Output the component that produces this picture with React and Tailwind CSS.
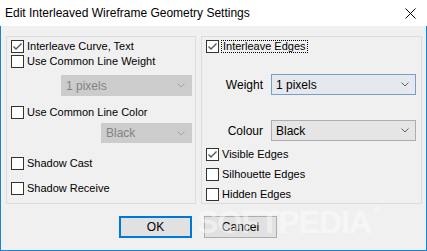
import React from "react";

const Check = ({ checked }) => (
  <div className="w-[13px] h-[13px] border border-[#333333] bg-white flex items-center justify-center shrink-0">
    {checked && (
      <svg width="11" height="11" viewBox="0 0 11 11">
        <path d="M1.5 5.5 L4 8 L9.5 2.5" fill="none" stroke="#555555" strokeWidth="1.4" />
      </svg>
    )}
  </div>
);

const Row = ({ checked, label, className = "", focus = false }) => (
  <div className={"flex items-center h-[13px] " + className}>
    <Check checked={checked} />
    {focus ? (
      <span className="ml-[2px] px-[1px] leading-[11px] border border-dotted border-black text-black">{label}</span>
    ) : (
      <span className="ml-[3px] leading-[13px] text-black">{label}</span>
    )}
  </div>
);

const Chevron = ({ color }) => (
  <svg width="8" height="5" viewBox="0 0 8 5" className="shrink-0">
    <path d="M0.5 0.5 L4 4 L7.5 0.5" fill="none" stroke={color} strokeWidth="1" />
  </svg>
);

const Select = ({ value, className = "", disabled = false, hover = false }) => (
  <div
    className={
      "flex items-center justify-between pl-[4px] pr-[6px] border " +
      (disabled
        ? "bg-[#cccccc] border-[#cccccc] text-[#838383] "
        : hover
        ? "bg-[#e5e9ee] border-[#7a9fc6] text-black "
        : "bg-[#e5e5e5] border-[#adadad] text-black ") +
      className
    }
  >
    <span className="text-[12px]">{value}</span>
    <Chevron color={disabled ? "#a6a6a6" : "#606060"} />
  </div>
);

export default function App() {
  return (
    <div
      className="w-[427px] h-[251px] bg-[#f0f0f0] relative overflow-hidden text-[11px]"
      style={{ fontFamily: '"Liberation Sans", Arial, sans-serif' }}
    >
      {/* Title bar */}
      <div className="h-[26px] bg-white flex items-center justify-between pl-[5px] pr-[11px]">
        <span className="text-[12px] text-black">
          Edit Interleaved Wireframe Geometry Settings
        </span>
        <svg width="11" height="11" viewBox="0 0 11 11">
          <path d="M0.5 0.5 L10.5 10.5 M10.5 0.5 L0.5 10.5" stroke="#000" strokeWidth="1" />
        </svg>
      </div>
      {/* Body */}
      <div className="h-[225px] border-x border-b border-[#1883d7] pt-[10px] pl-[5px]">
        <div className="flex gap-[5px]">
          {/* Left group */}
          <div className="w-[190px] h-[168px] border border-[#dcdcdc] flex flex-col pl-[4px]">
            <Row checked label="Interleave Curve, Text" className="mt-[3px]" />
            <Row label="Use Common Line Weight" className="mt-[2px]" />
            <Select value="1 pixels" disabled className="mt-[7px] ml-[50px] w-[131px] h-[21px]" />
            <Row label="Use Common Line Color" className="mt-[10px]" />
            <Select value="Black" disabled className="mt-[4px] ml-[90px] w-[91px] h-[20px]" />
            <Row label="Shadow Cast" className="mt-[14px]" />
            <Row label="Shadow Receive" className="mt-[12px]" />
          </div>
          {/* Right group */}
          <div className="w-[221px] h-[168px] border border-[#dcdcdc] flex flex-col pl-[4px]">
            <Row checked focus label="Interleave Edges" className="mt-[3px]" />
            <div className="flex items-center mt-[21px] h-[21px]">
              <span className="w-[57px] text-right text-[12px] text-black">Weight</span>
              <Select value="1 pixels" hover className="ml-[8px] w-[145px] h-[21px]" />
            </div>
            <div className="flex items-center mt-[25px] h-[21px]">
              <span className="w-[57px] text-right text-[12px] text-black">Colour</span>
              <Select value="Black" className="ml-[8px] w-[145px] h-[21px]" />
            </div>
            <Row checked label="Visible Edges" className="mt-[7px]" />
            <Row label="Silhouette Edges" className="mt-[7px]" />
            <Row label="Hidden Edges" className="mt-[7px]" />
          </div>
        </div>
        {/* Buttons */}
        <div className="flex mt-[12px] pl-[113px] gap-[12px]">
          <button className="w-[73px] h-[22px] border-2 border-[#0078d7] bg-[#e1e1e1] text-[12px] text-black">
            OK
          </button>
          <button className="w-[73px] h-[22px] border border-[#adadad] bg-[#e1e1e1] text-[12px] text-black">
            Cancel
          </button>
        </div>
      </div>
      {/* Watermark */}
      <div
        className="absolute left-[197px] top-[206px] text-[32px] font-bold text-white/45 tracking-[-1px] leading-none pointer-events-none"
        style={{ fontFamily: '"Liberation Sans", Arial, sans-serif' }}
      >
        SOFTPEDIA<span className="text-[9px] align-top ml-[2px]">®</span>
      </div>
    </div>
  );
}
